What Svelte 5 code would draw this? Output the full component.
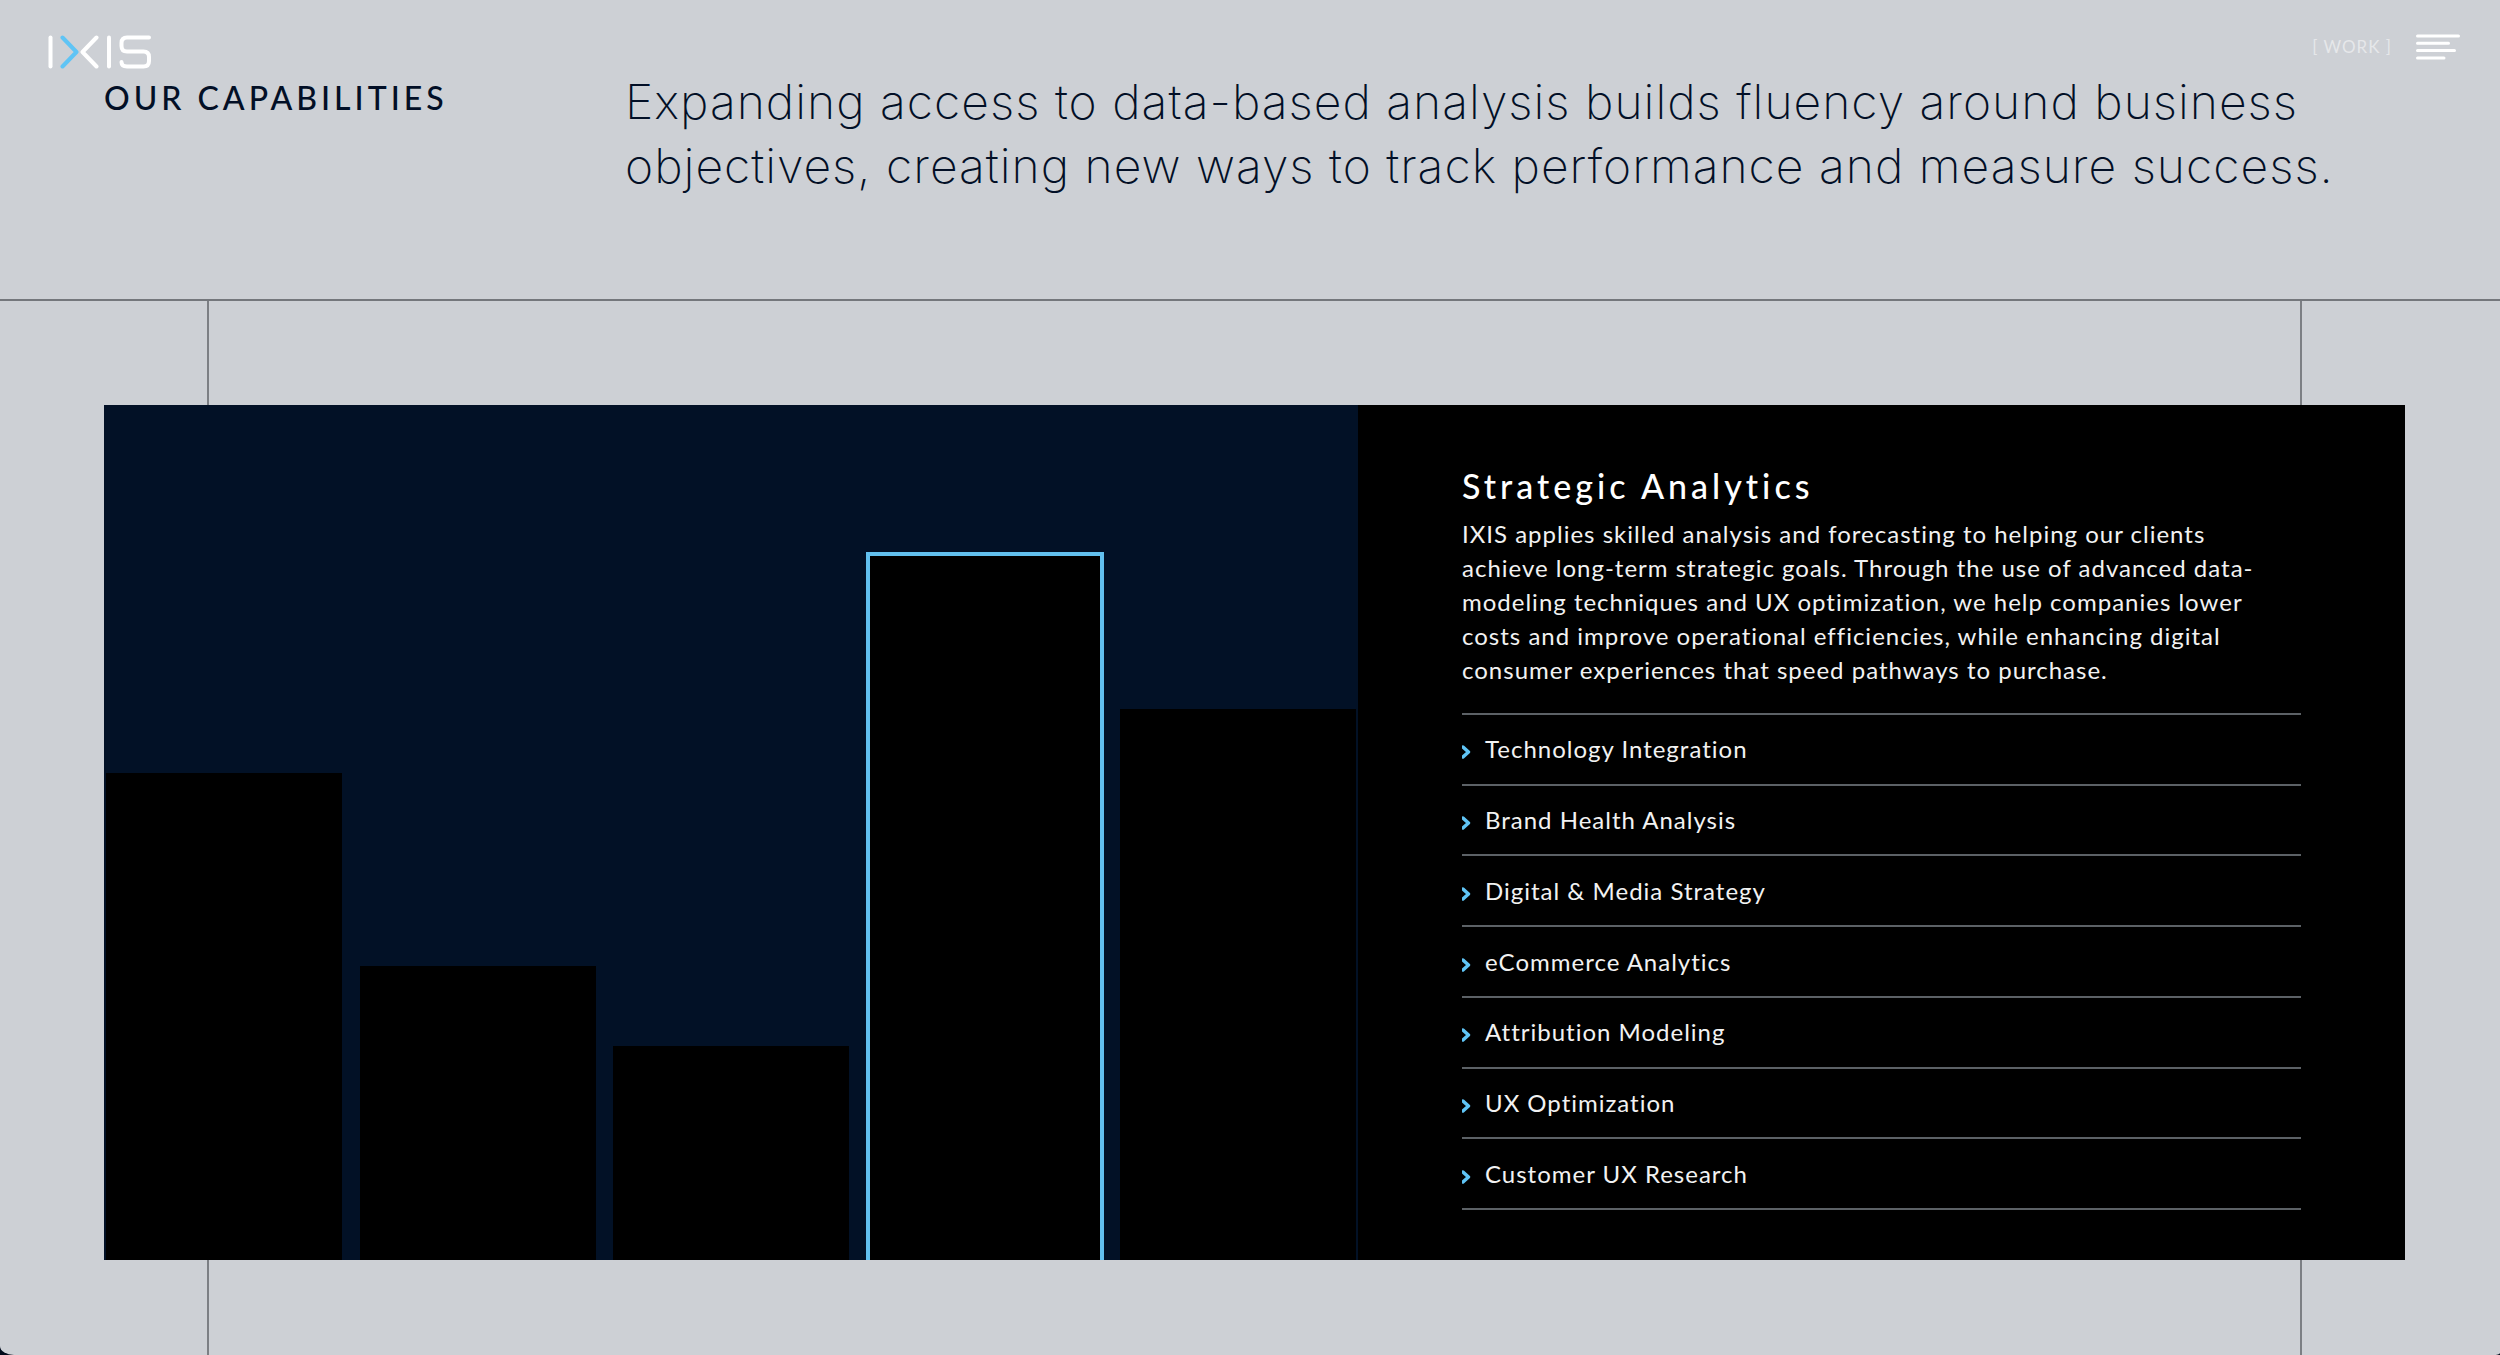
<script>
    const bars = [
        { height: 57, active: false },
        { height: 34.4, active: false },
        { height: 25, active: false },
        { height: 82.7, active: true },
        { height: 64.4, active: false }
    ];

    const services = [
        'Technology Integration',
        'Brand Health Analysis',
        'Digital & Media Strategy',
        'eCommerce Analytics',
        'Attribution Modeling',
        'UX Optimization',
        'Customer UX Research'
    ];
</script>

<div class="page">
    <header class="topbar">
        <a class="logo" href="/" aria-label="IXIS">
            <svg width="104" height="34" viewBox="0 0 104 34" fill="none" stroke="#fff" stroke-width="4" stroke-linecap="round" stroke-linejoin="round">
                <path d="M2.5 2.5V31.5" />
                <path d="M14.5 2.5L28.5 17L14.5 31.5" stroke="#5fc4f5" />
                <path d="M48.5 2.5L34.5 17L48.5 31.5" />
                <path d="M61 2.5V31.5" />
                <path d="M101 2.5H79Q73.5 2.5 73.5 8V11Q73.5 16.5 79 16.5H95.5Q101 16.5 101 22V26Q101 31.5 95.5 31.5H79Q73.5 31.5 73.5 27" />
            </svg>
        </a>
        <nav class="nav">
            <a class="work" href="/work">[ WORK ]</a>
            <button class="menu" aria-label="Menu">
                <svg width="44" height="26" viewBox="0 0 44 26" stroke="#fff" stroke-width="3" stroke-linecap="round">
                    <path d="M1.5 2H42.5M1.5 9.3H32.5M1.5 16.6H38.5M1.5 23.9H28" />
                </svg>
            </button>
        </nav>
    </header>

    <section class="intro">
        <h2>OUR CAPABILITIES</h2>
        <p>Expanding access to data-based analysis builds fluency around business objectives, creating new ways to track performance and measure success.</p>
    </section>

    <section class="stage">
        <div class="panel">
            <div class="chart">
                {#each bars as bar}
                    <div class="bar" class:active={bar.active} style="height: {bar.height}%"></div>
                {/each}
            </div>
            <div class="details">
                <h3>Strategic Analytics</h3>
                <p>IXIS applies skilled analysis and forecasting to helping our clients achieve long-term strategic goals. Through the use of advanced data-modeling techniques and UX optimization, we help companies lower costs and improve operational efficiencies, while enhancing digital consumer experiences that speed pathways to purchase.</p>
                <ul>
                    {#each services as service}
                        <li>
                            <svg width="10" height="14" viewBox="0 0 10 14" fill="none" stroke="#5fc4f5" stroke-width="3.4" stroke-linecap="round" stroke-linejoin="round">
                                <path d="M1 2L6.5 7L1 12" />
                            </svg>
                            {service}
                        </li>
                    {/each}
                </ul>
            </div>
        </div>
    </section>
</div>

<style>
    :global(body) {
        background-color: #020b1c;
    }

    .page {
        position: relative;
        display: flex;
        flex-direction: column;
        box-sizing: border-box;
        min-height: 100vh;
        overflow: hidden;
        background-color: #cdd0d5;
        border-bottom-left-radius: 14px 9px;
        border-bottom-right-radius: 7px 2px;
        font-family: Lato, "Open Sans", sans-serif;
    }

    .topbar {
        position: absolute;
        top: 0;
        left: 0;
        right: 0;
        z-index: 2;
        display: flex;
        justify-content: space-between;
        align-items: flex-start;
        padding: 34px 40px 0 48px;
    }

    .topbar svg {
        display: block;
    }

    .logo {
        padding-top: 1px;
    }

    .nav {
        display: flex;
        align-items: center;
        gap: 24px;
    }

    .work {
        color: rgba(255, 255, 255, 0.5);
        font-size: 17px;
        line-height: 26px;
        letter-spacing: 1px;
        text-decoration: none;
    }

    .menu {
        padding: 0;
        border: none;
        background: none;
        cursor: pointer;
    }

    .intro {
        display: grid;
        grid-template-columns: 521px 1fr;
        padding: 70px 104px 101px;
        color: #020f26;
    }

    .intro h2 {
        margin: 0;
        font-size: 32px;
        font-weight: 500;
        line-height: 56px;
        letter-spacing: 4px;
    }

    .intro p {
        margin: 0;
        font-family: Inter, sans-serif;
        font-size: 48px;
        font-weight: 200;
        line-height: 64px;
        letter-spacing: 1px;
    }

    .stage {
        position: relative;
        flex: 1;
        padding: 104px 95px 95px 104px;
        border-top: 2px solid #74777c;
    }

    .stage::before,
    .stage::after {
        content: "";
        position: absolute;
        top: 0;
        bottom: 0;
        width: 2px;
        background-color: #7c7f84;
    }

    .stage::before {
        left: 207px;
    }

    .stage::after {
        right: 198px;
    }

    .panel {
        position: relative;
        z-index: 1;
        display: grid;
        grid-template-columns: 1254fr 1047fr;
        min-height: 34.2vw;
        background-color: #000;
    }

    .chart {
        display: flex;
        align-items: flex-end;
        justify-content: space-between;
        overflow: hidden;
        padding: 0 2px;
        background-color: #021126;
    }

    .bar {
        width: calc((100% - 70px) / 5);
        box-sizing: border-box;
        background-color: #000;
    }

    .bar.active {
        border: 3px solid #62c0ee;
        border-bottom: none;
        box-shadow: 0 0 0 1px #62c0ee;
    }

    .details {
        display: flex;
        flex-direction: column;
        padding: 59px 104px 50px;
        color: #fff;
    }

    .details h3 {
        margin: 0;
        font-size: 34px;
        font-weight: 500;
        line-height: 44px;
        letter-spacing: 4px;
    }

    .details p {
        margin: 9px 0 26px;
        padding-right: 16px;
        color: #f2f2f2;
        font-size: 24px;
        line-height: 34px;
        letter-spacing: 1px;
    }

    .details ul {
        flex: 1;
        display: flex;
        flex-direction: column;
        margin: 0;
        padding: 0;
        list-style: none;
        border-top: 2px solid #5c6166;
    }

    .details li {
        flex: 1;
        display: flex;
        align-items: center;
        gap: 13px;
        border-bottom: 2px solid #5c6166;
        color: #f2f2f2;
        font-size: 24px;
        line-height: 34px;
        letter-spacing: 1px;
    }

    .details li svg {
        margin-top: 6px;
    }
</style>
